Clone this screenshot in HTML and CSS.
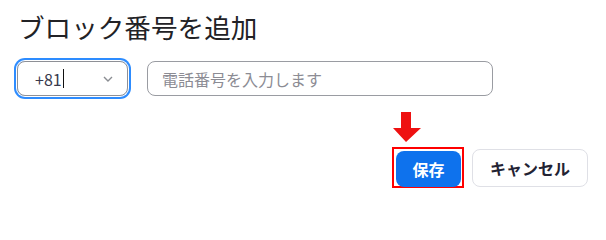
FILE: index.html
```html
<!DOCTYPE html>
<html lang="ja">
<head>
<meta charset="utf-8">
<link rel="stylesheet" href="styles.css">
</head>
<body>
<div class="dialog">
  <h1 class="title">ブロック番号を追加</h1>
  <div class="fields">
    <div class="select">
      <span class="value">+81<span class="caret"></span></span>
      <svg class="chevron" width="10" height="6" viewBox="0 0 10 6"><polyline points="1,1 5,5 9,1" fill="none" stroke="#8a8d92" stroke-width="1.4"/></svg>
    </div>
    <div class="input"><span class="placeholder">電話番号を入力します</span></div>
  </div>
  <div class="actions">
    <span class="highlight">
      <svg class="arrow" width="28" height="30" viewBox="0 0 28 30"><path d="M8 0H18V16H28L13 30L0 16H8Z" fill="#ee1111"/></svg>
      <button class="btn btn-primary">保存</button>
    </span>
    <button class="btn btn-secondary">キャンセル</button>
  </div>
</div>
</body>
</html>
```

FILE: styles.css
```css
html, body {
  margin: 0;
  padding: 0;
  background: #ffffff;
}
body {
  font-family: "Noto Sans CJK JP", "Noto Sans", sans-serif;
  color: #232333;
}
.dialog {
  display: flex;
  flex-direction: column;
  padding: 8px 18px 0 18px;
}
.title {
  margin: 0;
  font-size: 26.6px;
  font-weight: 400;
  line-height: 38px;
  color: #222226;
}
.fields {
  display: flex;
  align-items: center;
  margin-top: 15px;
  margin-left: -1px;
  gap: 19px;
}
.select {
  box-sizing: border-box;
  width: 111px;
  height: 35px;
  border: 1px solid #8e9096;
  border-radius: 8px;
  box-shadow: 0 0 0 1px #ffffff, 0 0 0 3px #2d8cff;
  display: flex;
  align-items: center;
  justify-content: space-between;
  padding: 0 14px 0 17px;
  font-size: 16px;
  color: #39394d;
}
.value {
  display: flex;
  align-items: center;
}
.caret {
  display: inline-block;
  width: 1px;
  height: 19px;
  background: #111111;
  margin-left: 1px;
}
.chevron {
  display: block;
}
.input {
  box-sizing: border-box;
  width: 346px;
  height: 35px;
  border: 1px solid #9a9ca2;
  border-radius: 8px;
  display: flex;
  align-items: center;
  padding-left: 14px;
  font-size: 16px;
}
.placeholder {
  color: #8c8c94;
}
.actions {
  display: flex;
  justify-content: flex-end;
  align-items: center;
  margin-top: 51px;
  gap: 8px;
}
.highlight {
  position: relative;
  display: flex;
  padding: 2px 1px 0 2px;
  border: 2px solid #ff0000;
  box-sizing: border-box;
  height: 41px;
}
.arrow {
  position: absolute;
  left: -1px;
  top: -37px;
}
.btn {
  font-family: "Noto Sans CJK JP", "Noto Sans", sans-serif;
  font-size: 16px;
  font-weight: 700;
  border-radius: 8px;
  height: 36px;
  box-sizing: border-box;
  cursor: pointer;
  display: flex;
  align-items: center;
  justify-content: center;
}
.btn-primary {
  width: 65px;
  background: #0e72ed;
  color: #ffffff;
  border: none;
}
.btn-secondary {
  width: 116px;
  height: 38px;
  background: #ffffff;
  color: #232333;
  border: 1px solid #dfe0e6;
}
```
